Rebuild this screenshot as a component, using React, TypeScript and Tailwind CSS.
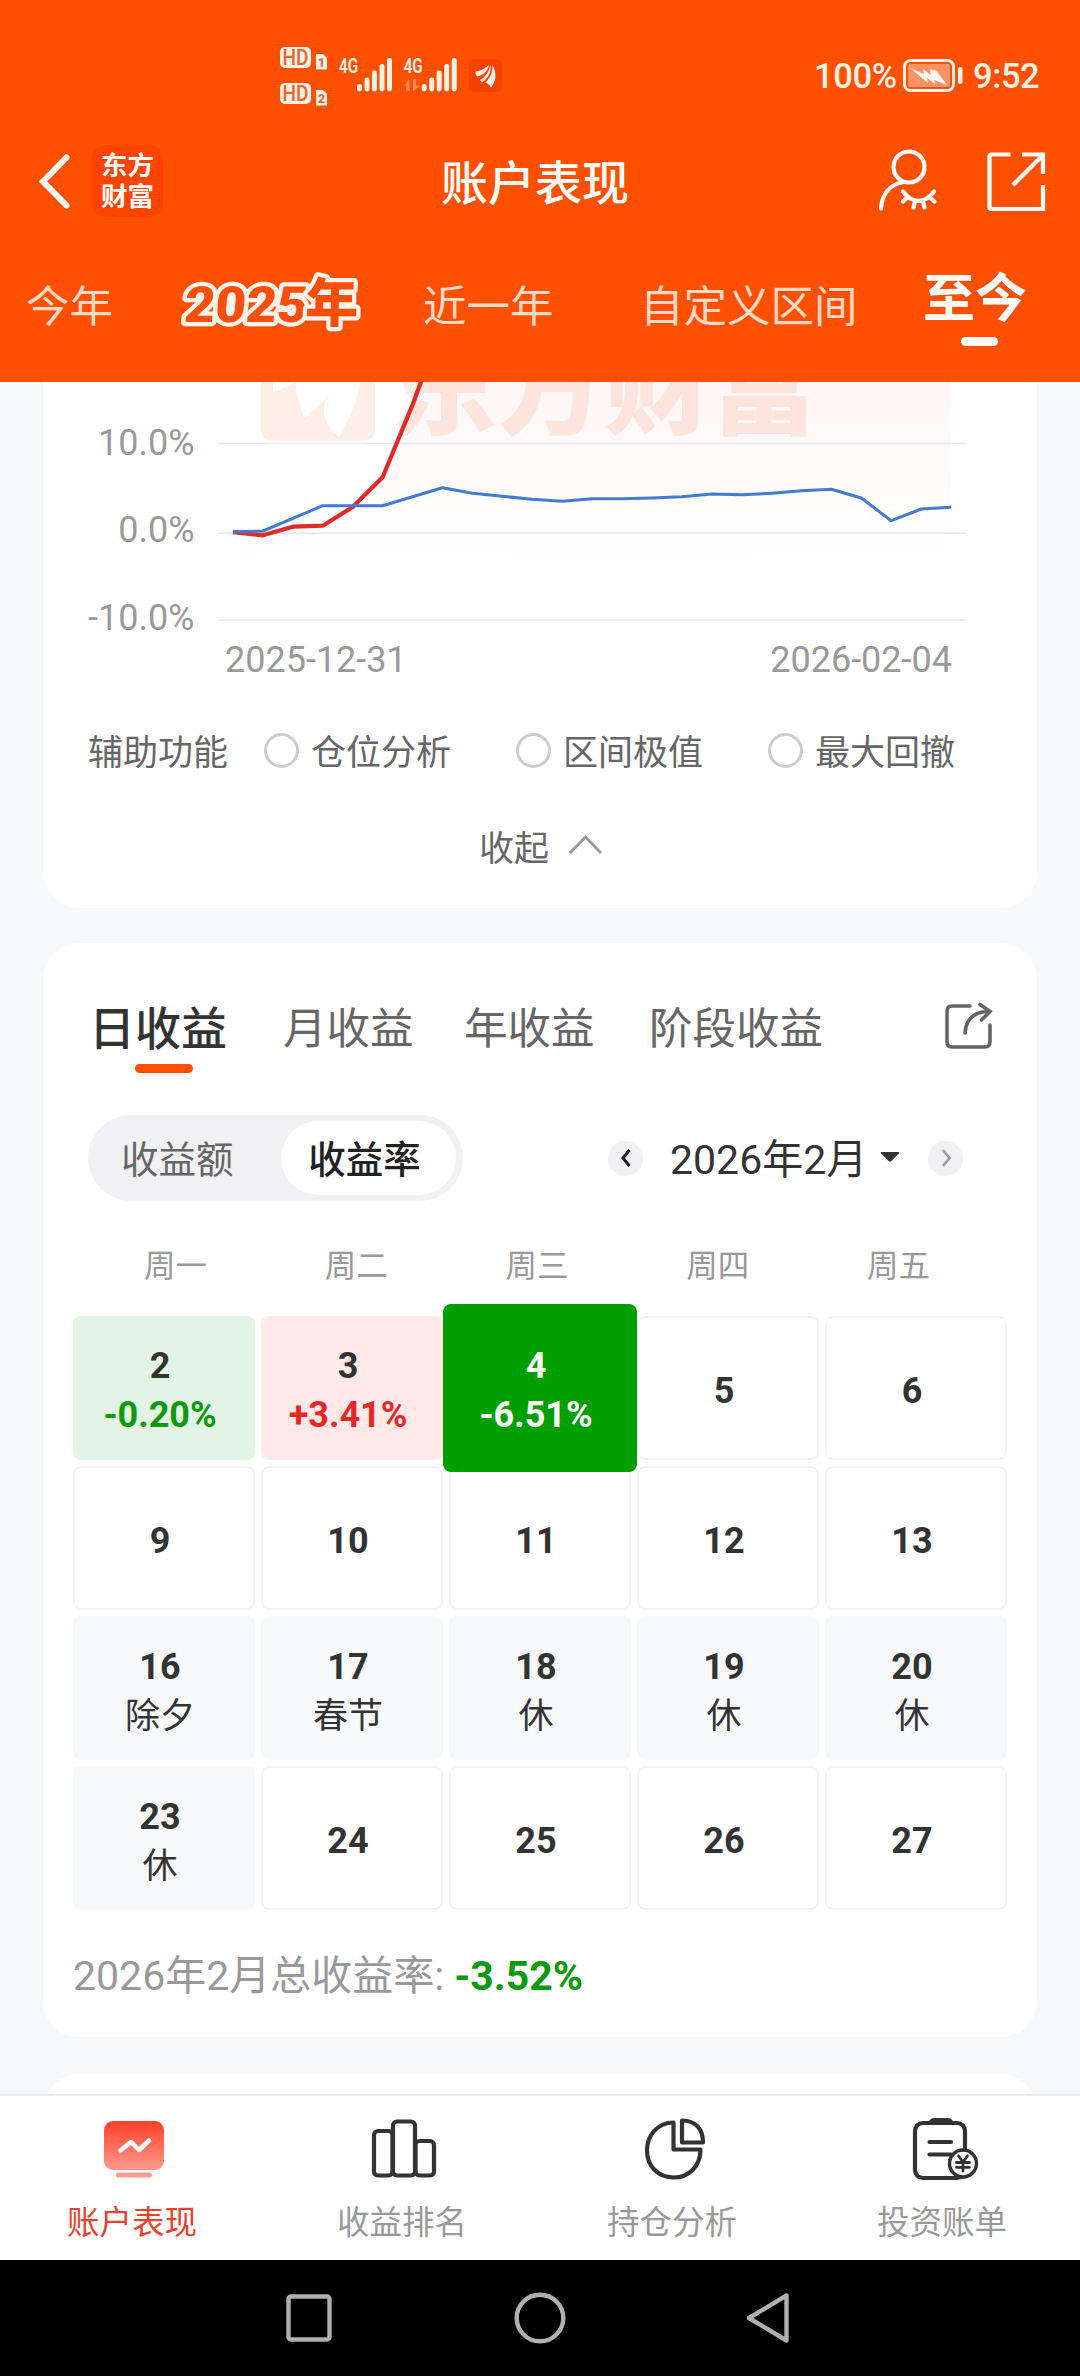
import React from "react";

const BLUE = [
  531.7, 531, 518.3, 505.7, 505.7, 505.7, 496.7, 487.7, 493.3, 496.3, 499.3, 501.3, 498.7, 498.7, 498,
  496.7, 494, 494.7, 493.3, 490.7, 489.3, 498, 520.7, 509, 507.3,
];
const RED = [532, 535.3, 526.7, 525.7, 507, 477.3, 405, 323];

const toPoints = (ys: number[]) =>
  ys.map((y, i) => `${(233 + i * 29.92).toFixed(1)},${(y - 382).toFixed(1)}`).join(" ");

function SignalIcons() {
  const bars = [
    [0, 38],
    [7.5, 31.5],
    [15, 24.5],
    [22.5, 18],
    [30, 12],
  ];
  return (
    <svg width="224" height="60" viewBox="0 0 224 60" className="mt-[46px] shrink-0">
      {[0, 36].map((dy, i) => (
        <g key={i} transform={`translate(0 ${dy})`}>
          <rect x="0" y="1" width="31" height="21" rx="5" fill="#fff1e6" />
          <text x="2.5" y="19.3" fontSize="21.5" fontWeight="500" fill="#e8662c" fontFamily="Roboto" textLength="26" lengthAdjust="spacingAndGlyphs">
            HD
          </text>
          <path d="M36 8h7l4 4v11.5h-11z" fill="#fff1e6" />
          <text x="41.5" y="20.5" textAnchor="middle" fontSize="13" fontWeight="800" fill="#e8662c" fontFamily="Roboto">
            {i + 1}
          </text>
        </g>
      ))}
      {[0, 64.7].map((dx, i) => (
        <g key={i} transform={`translate(${dx} 0)`} fill="#fff1e6">
          <text x="59" y="27" fontSize="20.5" fontWeight="600" fontFamily="Roboto" textLength="19" lengthAdjust="spacingAndGlyphs">
            4G
          </text>
          {bars.map(([x, y]) => (
            <rect key={x} x={77 + x} y={y} width="5" height={45.5 - y} rx="2.4" />
          ))}
        </g>
      ))}
      <path d="M124 39.5l5.5-6.500v12h-3.500v-5.500zM133 33h3v6.500h4.500l-7.500 6z" fill="#ff8a58" />
      <rect x="189" y="13" width="33" height="33" rx="6" fill="#f54200" />
      <g fill="#fff4ec">
        <path d="M195.500 25.500c5-.5 10-3.500 13.500-6.200-1.500 6-6 10.500-12 11.200-1.200-1.600-1.700-3.200-1.500-5z" />
        <path d="M200 34c5.500-3 9-8 10.300-15 1.800 7-2.200 13-8.300 17.500z" />
        <path d="M205.500 36.500c4.500-4.500 7.300-10 6.800-17.500 4.700 8 4 16-1.300 23-.8-2.500-2.500-4.500-5.500-5.500z" />
      </g>
      <path d="M211.200 19c1 6-1.800 13-8 18.500" fill="none" stroke="#f54200" strokeWidth="0.900" />
    </svg>
  );
}

function StatusBar() {
  return (
    <div className="flex h-[136px] items-start pl-[280px] pr-[40px]">
      <SignalIcons />
      <div className="ml-auto flex h-[42px] items-center mt-[55px] text-[34.500px] leading-[42px] font-medium tracking-[-0.4px] text-[#fff1e6]">
        <span className="w-[88px] whitespace-nowrap">100%</span>
        <svg width="62" height="36" viewBox="0 0 62 36" className="shrink-0">
          <rect x="2.500" y="2.500" width="49" height="30" rx="6" fill="none" stroke="#fff1e6" strokeWidth="3" />
          <rect x="6" y="6" width="42" height="23" rx="2" fill="#ff9364" />
          <path d="M8 10l14 6-1-5 8 6-1-6 7 2 1 2 9 12-13-5 1 4-8-6 1 5z" fill="#fff7f0" />
          <rect x="56" y="9" width="4.500" height="17" rx="2" fill="#fff1e6" />
        </svg>
        <span className="ml-[9px] w-[67px] whitespace-nowrap">9:52</span>
      </div>
    </div>
  );
}

function TitleBar() {
  return (
    <div className="flex h-[90px] items-center text-white">
      <svg width="34" height="60" viewBox="0 0 34 60" className="ml-[37px] shrink-0">
        <path d="M29.500 6.500L6 30.500l23.500 24" fill="none" stroke="#fff" strokeWidth="6" strokeLinecap="round" strokeLinejoin="miter" />
      </svg>
      <div className="ml-[21px] flex h-[72px] w-[71px] flex-col items-center justify-center rounded-[14px] bg-[#ff4400] text-[26.500px] leading-[31px] font-bold">
        <span>东方</span>
        <span>财富</span>
      </div>
      <h1 className="ml-[278px] mt-[5px] w-[188px] whitespace-nowrap text-[47px] leading-[56px] font-medium">账户表现</h1>
      <svg width="64" height="66" viewBox="0 0 64 66" className="ml-[247px] shrink-0" fill="none" stroke="#fff" strokeWidth="4.200" strokeLinecap="round">
        <circle cx="33" cy="19" r="15.500" />
        <path d="M5 60.500C6 46 14 36.500 27 34.200" />
        <path d="M27 43.500C36 56 49 56 58 43.500M31 49.500l-4 4M39 53.500l-1.500 6M47 53.500l1.500 6M54 49.500l4.500 4" />
      </svg>
      <svg width="60" height="60" viewBox="0 0 60 60" className="ml-[46px] shrink-0" fill="none" stroke="#fff" strokeWidth="4.200">
        <path d="M24.500 3.500H5.500q-2 0-2 2v50.500q0 2 2 2H57V34M36 3.500h21V23M56 5L27 34" />
      </svg>
    </div>
  );
}

function RangeTabs() {
  return (
    <div className="flex h-[156px] items-start whitespace-nowrap pt-[46px] text-[43.500px] leading-[72px] text-[#ffd9c4]">
      <span className="ml-[26px] w-[87px]">今年</span>
      <svg width="190" height="76" viewBox="0 0 190 76" className="ml-[65px] -mt-[3px] shrink-0 overflow-visible" fontWeight="900" fill="#ff4e0a" stroke="#fff4ec" strokeWidth="8.500" strokeLinejoin="round" paintOrder="stroke">
        <text x="10" y="53" fontSize="50" fontFamily="Roboto, sans-serif" textLength="123" lengthAdjust="spacingAndGlyphs" transform="skewX(-5)">
          2025
        </text>
        <text x="128" y="53" fontSize="53" fontFamily="'Noto Sans CJK SC', sans-serif" transform="skewX(-1)">
          年
        </text>
      </svg>
      <span className="ml-[55px] w-[130px]">近一年</span>
      <span className="ml-[87px] w-[217px]">自定义区间</span>
      <div className="ml-[66px] -mt-[8px] flex flex-col text-[52px] font-bold text-white">
        <span>至今</span>
        <span className="ml-[38px] mt-[1px] h-[9px] w-[37px] rounded-full bg-white" />
      </div>
    </div>
  );
}

function Chart() {
  return (
    <svg width="994" height="300" viewBox="43 0 994 300" className="block">
      <defs>
        <linearGradient id="area" x1="0" y1="0" x2="0" y2="224" gradientUnits="userSpaceOnUse">
          <stop offset="0" stopColor="#f03a3a" stopOpacity="0.045" />
          <stop offset="0.6" stopColor="#f03a3a" stopOpacity="0.012" />
          <stop offset="1" stopColor="#f03a3a" stopOpacity="0.002" />
        </linearGradient>
      </defs>
      <path d="M261 -20h114v66q0 13-13 13h-88q-13 0-13-13z" fill="#fdeee7" />
      <path d="M273 10C291 5 306 -5 316 -20h-43zM296 0C312 -4 330 -8 342 -14C336 10 318 25 304 36C302 25 295 15 296 0zM341 -10C334 10 320 18 325 36C327 46 334 50 339 55C351 35 359 15 363 -14z" fill="#fff" />
      <text x="390" y="44" fontSize="107" fontWeight="900" fill="#fdebe4" fontFamily="'Noto Sans CJK SC', sans-serif">
        东方财富
      </text>
      <polygon points={`${toPoints(RED)} 951,-60 951,224 233,224`} fill="url(#area)" />
      <g stroke="#e6e8ee" strokeWidth="1.500">
        <path d="M218.500 61.500H967M218.500 151.300H967M218.500 238.300H967" />
      </g>
      <polyline points={toPoints(RED)} fill="none" stroke="#dc2c2c" strokeWidth="4.300" strokeLinejoin="round" />
      <polyline points={toPoints(BLUE)} fill="none" stroke="#437bcd" strokeWidth="3" strokeLinejoin="round" />
      <g fontFamily="Roboto, sans-serif" fontSize="36" fill="#999">
        <g textAnchor="end">
          <text x="194.500" y="73">10.0%</text>
          <text x="194.500" y="160">0.0%</text>
          <text x="194.500" y="248">-10.0%</text>
        </g>
        <text x="225" y="290">2025-12-31</text>
        <text x="952" y="290" textAnchor="end">2026-02-04</text>
      </g>
    </svg>
  );
}

function Option({ label, className }: { label: string; className: string }) {
  return (
    <div className={`flex items-center ${className}`}>
      <span className="h-[35px] w-[35px] shrink-0 rounded-full border-[3px] border-[#ccc]" />
      <span className="ml-[12px] mt-[7px]">{label}</span>
    </div>
  );
}

function ChartCard() {
  return (
    <section className="mx-[43px] h-[526px] rounded-b-[36px] bg-white">
      <Chart />
      <div className="mt-[43px] flex h-[50px] items-center whitespace-nowrap text-[35px] leading-[50px] text-[#666]">
        <span className="ml-[45px] mt-[7px] w-[140px]">辅助功能</span>
        <Option label="仓位分析" className="ml-[36px] w-[187px]" />
        <Option label="区间极值" className="ml-[65px] w-[187px]" />
        <Option label="最大回撤" className="ml-[65px] w-[187px]" />
      </div>
      <div className="mt-[45px] flex h-[50px] items-center pl-[436px] text-[35px] leading-[50px] text-[#666]">
        <span className="mt-[9px] w-[70px]">收起</span>
        <svg width="36" height="24" viewBox="0 0 36 24" className="ml-[19px]">
          <path d="M2 20L17.500 4L33 20" fill="none" stroke="#999" strokeWidth="2.800" />
        </svg>
      </div>
    </section>
  );
}

type Day = { d: number; sub?: string; kind?: "down" | "up" | "active" | "rest" };

const DAYS: Day[] = [
  { d: 2, sub: "-0.20%", kind: "down" },
  { d: 3, sub: "+3.41%", kind: "up" },
  { d: 4, sub: "-6.51%", kind: "active" },
  { d: 5 },
  { d: 6 },
  { d: 9 },
  { d: 10 },
  { d: 11 },
  { d: 12 },
  { d: 13 },
  { d: 16, sub: "除夕", kind: "rest" },
  { d: 17, sub: "春节", kind: "rest" },
  { d: 18, sub: "休", kind: "rest" },
  { d: 19, sub: "休", kind: "rest" },
  { d: 20, sub: "休", kind: "rest" },
  { d: 23, sub: "休", kind: "rest" },
  { d: 24 },
  { d: 25 },
  { d: 26 },
  { d: 27 },
];

const CELL = {
  plain: "border-2 border-[#f3f3f3] pt-[2px] text-[#333]",
  down: "bg-[#e4f4e4] text-[#333]",
  up: "bg-[#fee9e8] text-[#333]",
  active: "z-10 -mx-[6px] -my-[12px] bg-[#009f00] text-white",
  rest: "bg-[#f7f8fa] pt-[2px] text-[#333]",
};
const SUB = {
  plain: "",
  down: "text-[#0d9a0d]",
  up: "text-[#e32828]",
  active: "text-white",
  rest: "font-normal text-[35px]",
};

function DayCell({ day }: { day: Day }) {
  const kind = day.kind ?? "plain";
  return (
    <div className={`flex flex-col items-center justify-center rounded-[8px] pr-[8px] text-[36px] leading-[49px] font-bold ${CELL[kind]}`}>
      <span className="mt-[5px]">{day.d}</span>
      {day.sub && <span className={SUB[kind]}>{day.sub}</span>}
    </div>
  );
}

function IncomeCard() {
  return (
    <section className="mx-[43px] mt-[35px] h-[1094px] rounded-[36px] bg-white pt-[44px]">
      <div className="flex h-[85px] items-start whitespace-nowrap text-[43.500px] leading-[85px] text-[#666]">
        <div className="ml-[46px] flex w-[141px] flex-col text-[46px] font-medium text-[#333]">
          <span className="h-[77px]">日收益</span>
          <span className="ml-[46px] h-[9px] w-[58px] rounded-full bg-[#ff5000]" />
        </div>
        <span className="ml-[53px] w-[131px]">月收益</span>
        <span className="ml-[50px] w-[131px]">年收益</span>
        <span className="ml-[54px] w-[176px]">阶段收益</span>
        <svg width="50" height="50" viewBox="0 0 50 50" className="ml-[119px] mt-[15px] shrink-0" fill="none" stroke="#666" strokeWidth="3.600">
          <path d="M26 4H8Q3 4 3 9V39.500Q3 45 8 45H41Q46 45 46 39.500V23" strokeLinecap="round" />
          <path d="M21 31C22 17 30 9.500 45 9.500M36 2.500L46 9.500L37.500 18" strokeLinecap="round" />
        </svg>
      </div>

      <div className="mt-[43px] flex h-[86px] items-center whitespace-nowrap">
        <div className="ml-[45px] flex h-[86px] w-[375px] items-center rounded-full bg-[#f1f1f4] text-[37.500px] leading-[50px]">
          <span className="ml-[33px] mt-[4px] w-[115px] text-[#666]">收益额</span>
          <span className="ml-[45px] flex h-[74px] w-[175px] items-center justify-center rounded-full bg-white pt-[4px] pr-[8px] font-medium text-[#222]">
            收益率
          </span>
        </div>
        <span className="ml-[145px] flex h-[35px] w-[35px] items-center justify-center rounded-full bg-[#f1f1f4]">
          <svg width="12" height="20" viewBox="0 0 12 20">
            <path d="M9.500 2L3 10l6.500 8" fill="none" stroke="#222" strokeWidth="3" />
          </svg>
        </span>
        <span className="ml-[27px] mt-[4px] w-[192px] text-[41px] leading-[50px] text-[#333]">2026年2月</span>
        <svg width="20" height="10" viewBox="0 0 20 10" className="ml-[18px] mb-[2px]">
          <path d="M1.500 0h17q1.500 0 .5 1.200L11.500 9q-1.500 1.500-3 0L1 1.200Q0 0 1.500 0z" fill="#333" />
        </svg>
        <span className="ml-[28px] flex h-[35px] w-[35px] items-center justify-center rounded-full bg-[#f1f1f4]">
          <svg width="12" height="20" viewBox="0 0 12 20">
            <path d="M3 2l6.500 8L3 18" fill="none" stroke="#999" strokeWidth="2.600" />
          </svg>
        </span>
      </div>

      <div className="ml-[42px] mt-[42px] grid h-[46px] w-[904px] grid-cols-5 text-center text-[31.500px] leading-[47px] text-[#999]">
        {["周一", "周二", "周三", "周四", "周五"].map((w) => (
          <span key={w}>{w}</span>
        ))}
      </div>

      <div className="ml-[30px] mt-[27px] grid w-[934px] auto-rows-[144px] grid-cols-5 gap-[6px]">
        {DAYS.map((day) => (
          <DayCell key={day.d} day={day} />
        ))}
      </div>

      <div className="ml-[30px] mt-[41px] flex items-center whitespace-nowrap text-[41px] leading-[50px] text-[#999]">
        <span>2026年2月总收益率:</span>
        <span className="ml-[10px] font-bold text-[#0d9a0d]">-3.52%</span>
      </div>
    </section>
  );
}

const NAV = [
  {
    label: "账户表现",
    active: true,
    icon: (
      <>
        <defs>
          <linearGradient id="screen" x1="0" y1="0" x2="0" y2="1">
            <stop offset="0" stopColor="#ff3f28" />
            <stop offset="1" stopColor="#ff9a8c" />
          </linearGradient>
        </defs>
        <rect x="5" y="6" width="60" height="49" rx="9" fill="url(#screen)" />
        <path d="M21.500 35.500L32 27l8 8 10-9.500" fill="none" stroke="#fff" strokeWidth="4.500" strokeLinecap="round" strokeLinejoin="round" />
        <rect x="17" y="57.500" width="36" height="5" rx="2.500" fill="#fa9e92" />
      </>
    ),
  },
  {
    label: "收益排名",
    icon: (
      <g fill="none" stroke="#333" strokeWidth="4.200">
        <rect x="5" y="16" width="18.500" height="44.500" rx="4" />
        <rect x="24" y="6.500" width="22" height="54" rx="4" />
        <rect x="46.500" y="26" width="18.500" height="34.500" rx="4" />
      </g>
    ),
  },
  {
    label: "持仓分析",
    icon: (
      <g fill="none" stroke="#333" strokeWidth="4.200" strokeLinejoin="round">
        <path d="M34.500 7.500C19 7.500 8 20 8 35.500S19 62.500 34.500 62.500 61.500 51 61.500 34.500H34.500z" />
        <path d="M43 5.500V27.500H64C64 14 56.500 5.500 43 5.500z" />
      </g>
    ),
  },
  {
    label: "投资账单",
    icon: (
      <>
        <g fill="none" stroke="#333" strokeWidth="4.200" strokeLinecap="round">
          <rect x="6" y="8" width="50" height="55" rx="8" />
          <path d="M20.500 27H42M20.500 39.500H42" />
        </g>
        <path d="M20 6q2-3 5-3h14q3 0 5 3l2 4H18z" fill="#333" />
        <circle cx="54" cy="48.500" r="13.500" fill="#fff" stroke="#333" strokeWidth="3.400" />
        <path d="M49.500 41l4.500 6 4.500-6M54 47v9M47.500 47.500h13M47.500 52.300h13" fill="none" stroke="#333" strokeWidth="2.800" strokeLinecap="round" />
      </>
    ),
  },
];

function BottomNav() {
  return (
    <nav className="grid h-[166px] grid-cols-4 border-t-2 border-[#ececec] bg-white">
      {NAV.map((n) => (
        <div key={n.label} className="flex flex-col items-center pr-[6px]">
          <svg width="72" height="70" viewBox="0 0 72 70" className="ml-[6px] mt-[19px] overflow-visible">
            {n.icon}
          </svg>
          <span className={n.active ? "mt-[17px] text-[32.500px] leading-[42px] text-[#e4432f]" : "mt-[17px] text-[32.500px] leading-[42px] text-[#999]"}>
            {n.label}
          </span>
        </div>
      ))}
    </nav>
  );
}

function SystemNav() {
  return (
    <div className="flex h-[116px] items-center bg-black">
      <svg width="46" height="48" viewBox="0 0 46 48" className="ml-[286px]">
        <rect x="2.500" y="2.500" width="41" height="43" rx="2.500" fill="none" stroke="#b0b0b0" strokeWidth="4.400" />
      </svg>
      <svg width="52" height="52" viewBox="0 0 52 52" className="ml-[182px]">
        <circle cx="26" cy="26" r="23.300" fill="none" stroke="#b0b0b0" strokeWidth="4.400" />
      </svg>
      <svg width="46" height="52" viewBox="0 0 46 52" className="ml-[179px]">
        <path d="M41.500 3.500V48.500L4 26z" fill="none" stroke="#b0b0b0" strokeWidth="4.400" strokeLinejoin="round" />
      </svg>
    </div>
  );
}

export default function App() {
  return (
    <div className="flex h-[2376px] w-[1080px] flex-col overflow-hidden bg-[#f7f8fa] font-[Roboto,'Noto_Sans_CJK_SC',sans-serif]">
      <header className="h-[382px] shrink-0 bg-[#ff5000]">
        <StatusBar />
        <TitleBar />
        <RangeTabs />
      </header>
      <main className="h-[1712px] shrink-0 overflow-hidden">
        <ChartCard />
        <IncomeCard />
        <section className="mx-[43px] mt-[37px] h-[80px] rounded-t-[36px] bg-white" />
      </main>
      <BottomNav />
      <SystemNav />
    </div>
  );
}
